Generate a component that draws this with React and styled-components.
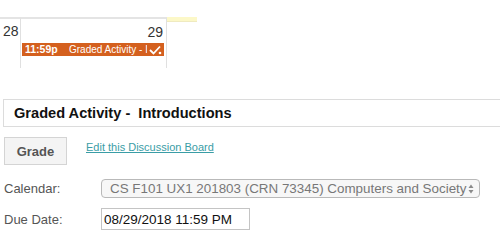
import styled, { createGlobalStyle } from "styled-components";

const GlobalStyle = createGlobalStyle`
  body {
    margin: 0;
    background: #fff;
    font-family: "Liberation Sans", Arial, Helvetica, sans-serif;
    color: #222;
  }
`;

const Page = styled.div`
  width: 500px;
  height: 246px;
  overflow: hidden;
  padding-top: 17px;
  box-sizing: border-box;
`;

const CalendarRow = styled.div`
  display: flex;
  height: 51px;
`;

const DayCell = styled.div`
  width: ${({ $w }) => $w}px;
  border-top: 2px solid #e4e4e4;
  border-left: ${({ $edge }) => ($edge ? "1px solid #e0e0e0" : "none")};
  border-right: ${({ $edge }) => ($edge ? "1px solid #e0e0e0" : "none")};
  box-sizing: border-box;
  display: flex;
  flex-direction: column;
`;

const TodayCell = styled.div`
  width: 30px;
  height: 5px;
  background: #fcf8c8;
  border-bottom: 1px solid #efeac0;
  box-sizing: border-box;
`;

const DayNum = styled.div`
  font-size: 14px;
  line-height: 16px;
  color: #333;
  text-align: ${({ $right }) => ($right ? "right" : "left")};
  padding: ${({ $right }) => ($right ? "5px 3px 0 0" : "4px 0 0 3px")};
`;

const EventBar = styled.div`
  margin: 3px 2px 0 1px;
  height: 13px;
  background: #d4601e;
  color: #fff;
  display: flex;
  align-items: center;
  font-size: 10px;
  line-height: 13px;
  padding-left: 3px;
  overflow: hidden;
`;

const EventTime = styled.span`
  font-weight: bold;
  font-size: 10.5px;
  flex: none;
  width: 44px;
`;

const EventTitle = styled.span`
  white-space: nowrap;
  overflow: hidden;
  width: 78px;
  flex: none;
`;

const EventIcon = styled.svg`
  flex: none;
  margin-left: 2px;
`;

const TitleBox = styled.div`
  margin: 31px 0 0 3px;
  height: 28px;
  border: 1px solid #dcdcdc;
  border-right: none;
  box-sizing: border-box;
  display: flex;
  align-items: center;
  padding-left: 10px;
  font-size: 14.6px;
  font-weight: bold;
  color: #111;
  white-space: pre;
`;

const ActionRow = styled.div`
  display: flex;
  align-items: flex-start;
  margin: 10px 0 0 4px;
  gap: 19px;
`;

const GradeButton = styled.button`
  width: 63px;
  height: 28px;
  background: #f4f4f4;
  border: 1px solid #d4d4d4;
  font-family: inherit;
  font-size: 13px;
  font-weight: bold;
  color: #555;
  padding: 0;
`;

const EditLink = styled.a`
  margin-top: 4px;
  font-size: 11px;
  color: #3a9da6;
  text-decoration: underline;
  cursor: pointer;
`;

const FormRow = styled.div`
  display: flex;
  align-items: center;
  margin: ${({ $top }) => $top}px 0 0 4px;
`;

const Label = styled.div`
  width: 97px;
  font-size: 13px;
  color: #555;
`;

const SelectBox = styled.div`
  width: 379px;
  height: 19px;
  box-sizing: border-box;
  border: 1px solid #b9b9b9;
  border-radius: 4px;
  background: #f7f7f7;
  display: flex;
  align-items: center;
  justify-content: space-between;
  padding: 0 5px 0 8px;
  font-size: 13.4px;
  color: #777;
  white-space: nowrap;
`;

const Arrows = styled.svg`
  flex: none;
`;

const DateInput = styled.div`
  width: 149px;
  height: 22px;
  box-sizing: border-box;
  border: 1px solid #c4c4c4;
  display: flex;
  align-items: center;
  padding-left: 2px;
  font-size: 13.5px;
  color: #111;
`;

export default function App() {
  return (
    <>
      <GlobalStyle />
      <Page>
        <CalendarRow>
          <DayCell $w={20}>
            <DayNum>28</DayNum>
          </DayCell>
          <DayCell $w={147} $edge>
            <DayNum $right>29</DayNum>
            <EventBar>
              <EventTime>11:59p</EventTime>
              <EventTitle>Graded Activity - Introductions</EventTitle>
              <EventIcon width="13" height="10" viewBox="0 0 13 10">
                <path d="M1 5 L4.5 8.5 L11 1.5" stroke="#fff" strokeWidth="1.8" fill="none" />
                <circle cx="11" cy="8" r="1.3" fill="#fff" />
              </EventIcon>
            </EventBar>
          </DayCell>
          <TodayCell />
        </CalendarRow>

        <TitleBox>{"Graded Activity -  Introductions"}</TitleBox>

        <ActionRow>
          <GradeButton>Grade</GradeButton>
          <EditLink>Edit this Discussion Board</EditLink>
        </ActionRow>

        <FormRow $top={14}>
          <Label>Calendar:</Label>
          <SelectBox>
            <span>CS F101 UX1 201803 (CRN 73345) Computers and Society</span>
            <Arrows width="6" height="10" viewBox="0 0 6 10">
              <path d="M3 0.5 L5.5 4 L0.5 4 Z" fill="#8a8a8a" />
              <path d="M3 9.5 L5.5 6 L0.5 6 Z" fill="#8a8a8a" />
            </Arrows>
          </SelectBox>
        </FormRow>
        <FormRow $top={10}>
          <Label>Due Date:</Label>
          <DateInput>08/29/2018 11:59 PM</DateInput>
        </FormRow>
      </Page>
    </>
  );
}
